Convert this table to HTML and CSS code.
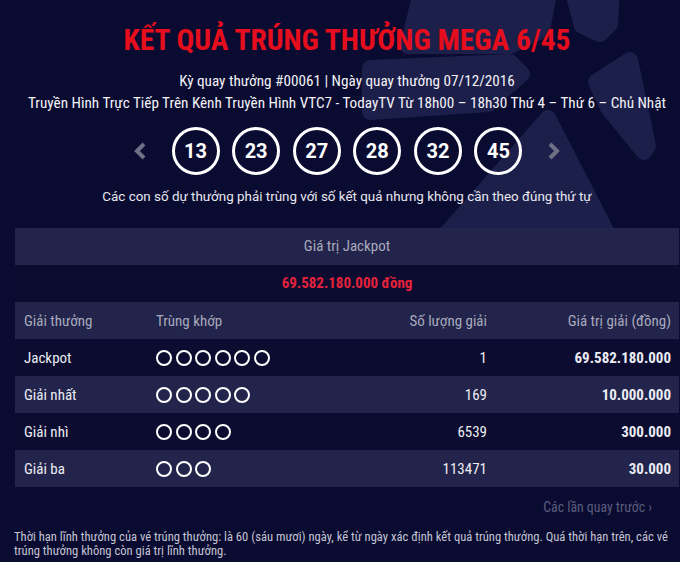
FILE: index.html
```html
<!DOCTYPE html>
<html lang="vi">
<head>
<meta charset="utf-8">
<title>Kết quả Mega 6/45</title>
<link rel="stylesheet" href="styles.css">
</head>
<body>
<div class="page">
  <svg class="deco" viewBox="0 0 320 240" width="320" height="240" aria-hidden="true">
    <g fill="#1d1f4b" stroke="#1d1f4b" stroke-width="16" stroke-linejoin="round">
      <polygon points="62,-12 190,-12 182,30 150,46 48,46"/>
      <polygon points="212,-12 252,-12 250,24 240,34 222,26"/>
      <polygon points="236,82 270,60 288,146 284,152 248,108"/>
      <polygon points="10,68 150,62 162,74 128,104 10,112"/>
      <polygon points="188,118 256,250 72,250"/>
    </g>
  </svg>
  <div class="content">
    <h1 class="title">KẾT QUẢ TRÚNG THƯỞNG MEGA 6/45</h1>
    <p class="info">Kỳ quay thưởng #00061 | Ngày quay thưởng 07/12/2016</p>
    <p class="info">Truyền Hình Trực Tiếp Trên Kênh Truyền Hình VTC7 - TodayTV Từ 18h00 – 18h30 Thứ 4 – Thứ 6 – Chủ Nhật</p>
    <div class="balls">
      <span class="arrow"><svg viewBox="0 0 14 18" width="14" height="18"><polyline points="11,2 4,9 11,16" fill="none" stroke="#6f7086" stroke-width="4"/></svg></span>
      <span class="ball">13</span>
      <span class="ball">23</span>
      <span class="ball">27</span>
      <span class="ball">28</span>
      <span class="ball">32</span>
      <span class="ball">45</span>
      <span class="arrow"><svg viewBox="0 0 14 18" width="14" height="18"><polyline points="3,2 10,9 3,16" fill="none" stroke="#6f7086" stroke-width="4"/></svg></span>
    </div>
    <p class="note">Các con số dự thưởng phải trùng với số kết quả nhưng không cần theo đúng thứ tự</p>

    <div class="results">
      <div class="jp-head">Giá trị Jackpot</div>
      <div class="jp-value">69.582.180.000 đồng</div>
      <div class="row head">
        <span>Giải thưởng</span><span>Trùng khớp</span><span class="r">Số lượng giải</span><span class="r">Giá trị giải (đồng)</span>
      </div>
      <div class="row dark">
        <span>Jackpot</span><span class="dots"><i></i><i></i><i></i><i></i><i></i><i></i></span><span class="r">1</span><span class="r b">69.582.180.000</span>
      </div>
      <div class="row light">
        <span>Giải nhất</span><span class="dots"><i></i><i></i><i></i><i></i><i></i></span><span class="r">169</span><span class="r b">10.000.000</span>
      </div>
      <div class="row dark">
        <span>Giải nhì</span><span class="dots"><i></i><i></i><i></i><i></i></span><span class="r">6539</span><span class="r b">300.000</span>
      </div>
      <div class="row light">
        <span>Giải ba</span><span class="dots"><i></i><i></i><i></i></span><span class="r">113471</span><span class="r b">30.000</span>
      </div>
    </div>

    <div class="prev"><a href="#">Các lần quay trước ›</a></div>
    <p class="footer">Thời hạn lĩnh thưởng của vé trúng thưởng: là 60 (sáu mươi) ngày, kể từ ngày xác định kết quả trúng thưởng. Quá thời hạn trên, các vé trúng thưởng không còn giá trị lĩnh thưởng.</p>
  </div>
</div>
</body>
</html>
```

FILE: styles.css
```css
html, body {
  margin: 0;
  padding: 0;
  background: #0a0b31;
}
body {
  width: 680px;
  height: 562px;
  overflow: hidden;
  font-family: "Roboto Condensed", "Liberation Sans Narrow", "Roboto", sans-serif;
  color: #ececf3;
}
.page {
  position: relative;
  width: 680px;
  height: 562px;
}
.deco {
  position: absolute;
  left: 360px;
  top: 0;
  z-index: 0;
}
.content {
  position: relative;
  z-index: 1;
  margin-left: 15px;
  width: 664px;
  padding-top: 24px;
}
.title {
  margin: 0;
  text-align: center;
  font-size: 29.5px;
  line-height: 32px;
  font-weight: 700;
  color: #e60d1d;
}
.info {
  margin: 0;
  text-align: center;
  font-size: 15.2px;
  line-height: 22px;
  color: #f2f2f7;
}
.title + .info {
  margin-top: 14px;
}
.balls {
  margin-top: 13px;
  display: flex;
  justify-content: center;
  align-items: center;
  gap: 12.6px;
  height: 48px;
}
.arrow {
  display: flex;
  width: 14px;
  height: 18px;
}
.arrow:first-child { margin-right: 12px; }
.arrow:last-child { margin-left: 12px; }
.ball {
  box-sizing: border-box;
  width: 48px;
  height: 48px;
  border: 3px solid #ffffff;
  border-radius: 50%;
  display: flex;
  align-items: center;
  justify-content: center;
  font-family: "Roboto", sans-serif;
  font-weight: 700;
  font-size: 20px;
  color: #ffffff;
}
.note {
  margin: 12px 0 0;
  text-align: center;
  font-family: "Roboto", sans-serif;
  font-size: 13.4px;
  line-height: 20px;
  color: #e8e8f0;
}
.results {
  margin-top: 21px;
  font-size: 15px;
}
.jp-head {
  height: 37px;
  line-height: 37px;
  text-align: center;
  background: #22244b;
  color: #a9aabd;
}
.jp-value {
  height: 37px;
  line-height: 37px;
  text-align: center;
  color: #e4223b;
  font-weight: 700;
  background: #0b0c30;
}
.row {
  display: grid;
  grid-template-columns: 132px 181px 150px 184px;
  align-items: center;
  height: 37px;
  padding: 0 8px 0 9px;
}
.row .r { text-align: right; }
.row .b { font-weight: 700; }
.head {
  background: #22244b;
  color: #a9aabd;
}
.dark { background: #0b0c30; }
.light { background: #22244b; }
.dots {
  display: flex;
  gap: 3.6px;
}
.dots i {
  box-sizing: border-box;
  width: 16px;
  height: 16px;
  border: 2px solid #ffffff;
  border-radius: 50%;
}
.prev {
  text-align: right;
  padding-right: 27px;
  margin-top: 11px;
  font-size: 13.8px;
  line-height: 18px;
}
.prev a {
  color: #5b5d7e;
  text-decoration: none;
}
.footer {
  margin: 14px 0 0 -1px;
  font-size: 12.6px;
  line-height: 14px;
  color: #c3c4d3;
}
```
